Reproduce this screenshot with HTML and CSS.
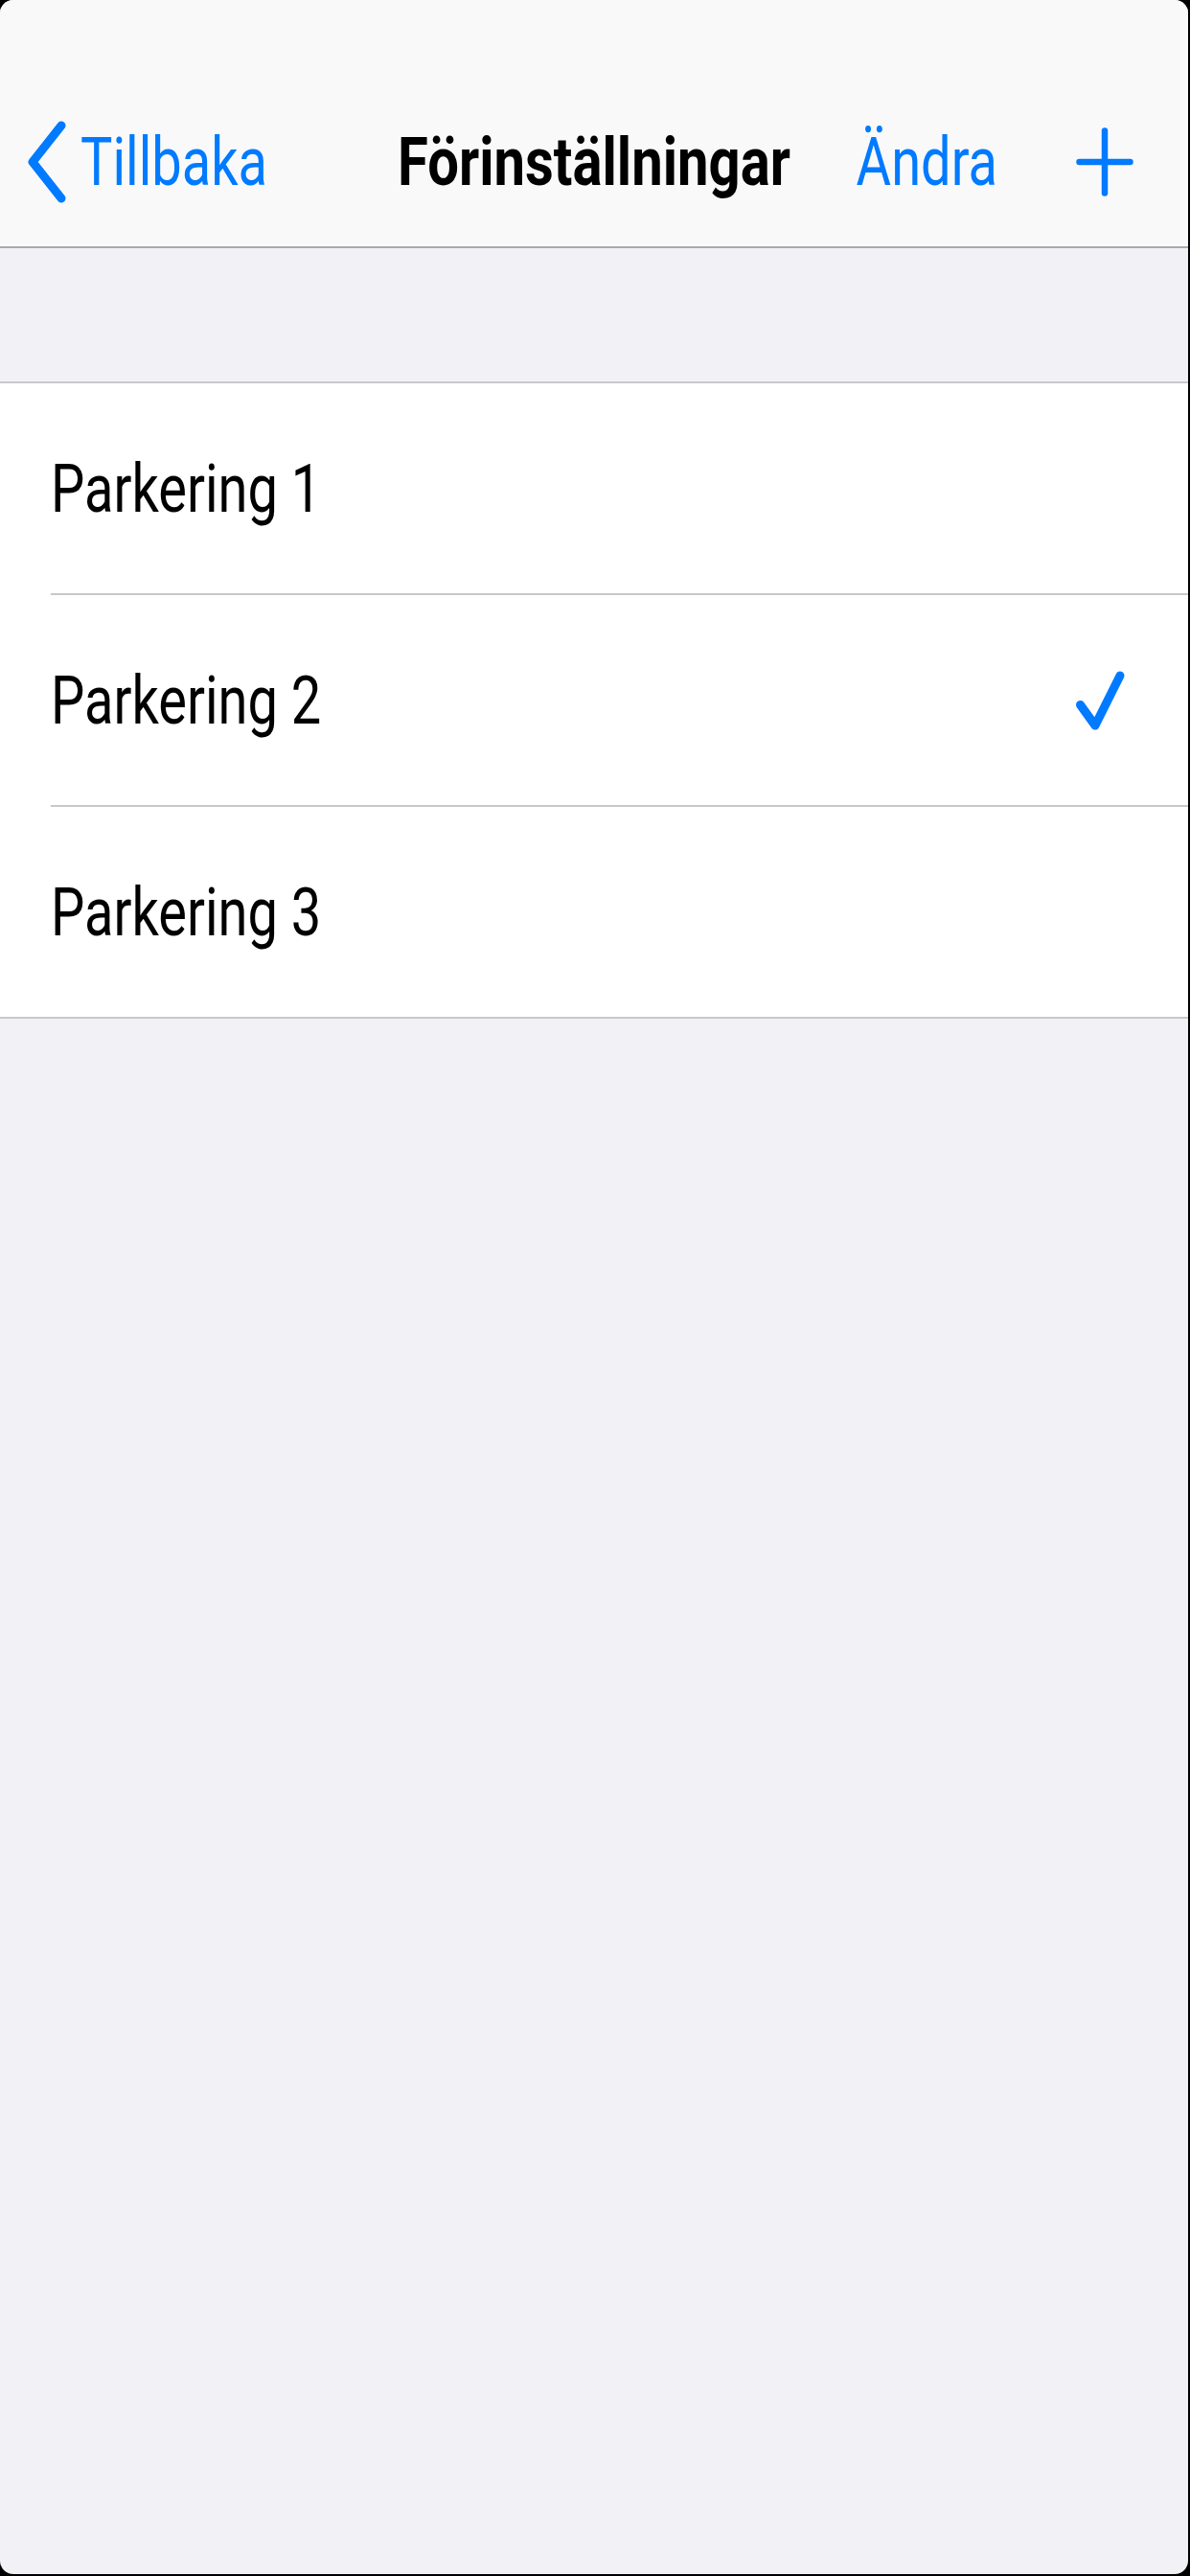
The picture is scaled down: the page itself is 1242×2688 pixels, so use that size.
FILE: index.html
```html
<!DOCTYPE html>
<html lang="sv">
<head>
    <meta charset="UTF-8">
    <meta name="viewport" content="width=device-width, initial-scale=1.0">
    <title>Förinställningar</title>
    <link rel="stylesheet" href="styles.css">
</head>
<body>
    <div class="screen">
        <div class="navbar">
            <div class="nav-left">
                <svg class="chevron" width="44" height="90" viewBox="0 0 44 90">
                    <path d="M38 7 L8 45 L38 83" fill="none" stroke="#007aff" stroke-width="9" stroke-linecap="round" stroke-linejoin="round"/>
                </svg>
                <span class="txt nav-link">Tillbaka</span>
            </div>
            <div class="nav-title"><span class="txt">Förinställningar</span></div>
            <div class="nav-right">
                <span class="txt nav-link">Ändra</span>
                <svg class="plus" width="60" height="72" viewBox="0 0 60 72">
                    <path d="M30 3.5 V68.5 M3.5 36 H56.5" fill="none" stroke="#007aff" stroke-width="6.5" stroke-linecap="round"/>
                </svg>
            </div>
        </div>

        <div class="list">
            <div class="row">
                <div class="row-inner"><span class="txt">Parkering 1</span></div>
            </div>
            <div class="row">
                <div class="row-inner">
                    <span class="txt">Parkering 2</span>
                    <svg class="check" width="56" height="66" viewBox="0 0 56 66">
                        <path d="M7.5 37.5 L23 59 L49 7" fill="none" stroke="#007aff" stroke-width="9" stroke-linecap="round" stroke-linejoin="round"/>
                    </svg>
                </div>
            </div>
            <div class="row">
                <div class="row-inner"><span class="txt">Parkering 3</span></div>
            </div>
        </div>
    </div>
</body>
</html>
```

FILE: styles.css
```css
html, body { margin: 0; padding: 0; background: #000; }
body { font-family: Roboto, "Liberation Sans", sans-serif; }
.screen { width: 1240px; height: 2686px; background: #f1f1f6; border-radius: 14px; overflow: hidden; }

.txt { display: inline-block; transform: scaleY(1.27); }

.navbar { box-sizing: border-box; height: 259px; padding-top: 80px; background: #f9f9f9; border-bottom: 2px solid #a9a9ae; display: grid; grid-template-columns: 1fr auto 1fr; align-items: center; }
.nav-left { display: flex; align-items: center; padding-left: 26px; }
.nav-left .chevron { margin-right: 14px; }
.nav-link { font-size: 56px; color: #007aff; }
.nav-title { font-size: 58px; font-weight: bold; color: #000; }
.nav-title .txt { transform: scaleY(1.2); }
.nav-right { display: flex; align-items: center; justify-content: flex-end; gap: 82px; padding-right: 57px; }

.list { margin-top: 139px; background: #fff; border-top: 2px solid #c8c7cc; border-bottom: 2px solid #c8c7cc; }
.row { padding-left: 53px; }
.row-inner { height: 219px; display: flex; align-items: center; justify-content: space-between; padding-right: 64px; font-size: 56px; color: #000; border-bottom: 2px solid #c8c7cc; }
.row:last-child .row-inner { border-bottom: none; }
```
